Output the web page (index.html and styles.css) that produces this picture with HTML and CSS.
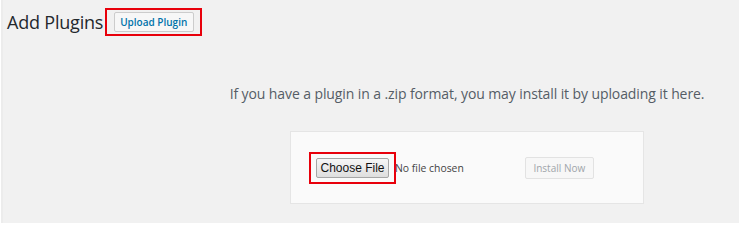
FILE: index.html
```html
<!DOCTYPE html>
<html>
<head>
<meta charset="utf-8">
<link rel="stylesheet" href="styles.css">
</head>
<body>
<div class="wrap">
  <div class="header">
    <h1 class="title">Add Plugins</h1>
    <div class="mark mark-upload">
      <button class="btn-upload">Upload Plugin</button>
    </div>
  </div>
  <div class="upload">
    <p class="help">If you have a plugin in a .zip format, you may install it by uploading it here.</p>
    <div class="card">
      <div class="mark mark-file">
        <button class="btn-file">Choose File</button>
      </div>
      <span class="nofile">No file chosen</span>
      <button class="btn-install">Install Now</button>
    </div>
  </div>
</div>
</body>
</html>
```
FILE: styles.css
```css
html, body {
  margin: 0;
  padding: 0;
  background: #ffffff;
}
body {
  padding-left: 1px;
  font-family: "Open Sans", "Liberation Sans", sans-serif;
}
.wrap {
  width: 738px;
  height: 223px;
  background: #f1f1f1;
  box-sizing: border-box;
  border-left: 2px solid #ececec;
  overflow: hidden;
}
.header {
  display: flex;
  align-items: center;
  padding-left: 4px;
  padding-top: 8px;
  height: 28px;
}
.title {
  margin: 0;
  font-size: 18px;
  font-weight: 400;
  letter-spacing: -0.2px;
  color: #23282d;
  line-height: 28px;
}
.mark {
  border: 2px solid #e8000b;
  box-sizing: border-box;
  display: flex;
  align-items: center;
  justify-content: center;
}
.mark-upload {
  width: 97px;
  height: 28px;
  margin-left: 2px;
}
.btn-upload {
  font-family: "Open Sans", sans-serif;
  font-size: 10px;
  font-weight: 600;
  color: #0073aa;
  background: #f7f7f7;
  border: 1px solid #cccccc;
  border-radius: 2px;
  height: 20px;
  width: 80px;
  padding: 0;
}
.upload {
  display: flex;
  flex-direction: column;
  align-items: center;
  padding-left: 192px;
}
.help {
  margin: 48px 0 0;
  font-size: 14px;
  letter-spacing: -0.1px;
  color: #555d66;
  line-height: 20px;
  white-space: nowrap;
}
.card {
  margin-top: 27px;
  width: 354px;
  height: 73px;
  box-sizing: border-box;
  background: #fafafa;
  border: 1px solid #e5e5e5;
  display: flex;
  align-items: center;
  padding-left: 18px;
}
.mark-file {
  width: 87px;
  height: 32px;
}
.btn-file {
  font-family: "Liberation Sans", Arial, sans-serif;
  font-size: 12px;
  color: #111;
  background: linear-gradient(#f6f6f6, #dedede);
  border: 1px solid #a6a6a6;
  border-radius: 2px;
  height: 20px;
  width: 73px;
  padding: 0;
}
.nofile {
  font-size: 10.4px;
  color: #444;
  margin-left: -1px;
}
.btn-install {
  margin-left: 61px;
  font-family: "Open Sans", sans-serif;
  font-size: 10px;
  color: #a0a5aa;
  background: #f7f7f7;
  border: 1px solid #e2e2e2;
  border-radius: 2px;
  height: 22px;
  width: 69px;
  padding: 0;
}
```
